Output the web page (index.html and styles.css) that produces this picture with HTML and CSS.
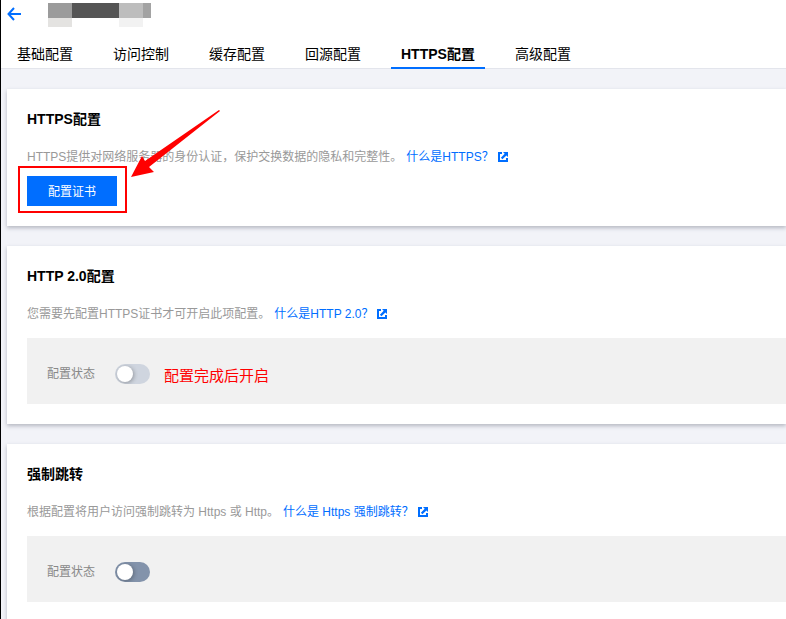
FILE: index.html
```html
<!DOCTYPE html>
<html lang="zh-CN">
<head>
    <meta charset="utf-8">
    <title>HTTPS配置</title>
    <link rel="stylesheet" href="styles.css">
</head>
<body>
    <svg class="sprite" aria-hidden="true">
        <symbol id="external" viewBox="0 0 10 10">
            <path d="M0 0h4v2H2v6h6V6h2v4H0z"/>
            <path d="M5 0h5v5L8.4 3.4 4.4 7.2 2.9 5.7 6.7 1.7z"/>
        </symbol>
    </svg>

    <header class="header">
        <div class="title-bar">
            <a class="back" href="#" aria-label="返回">
                <svg width="14" height="14" viewBox="0 0 14 14">
                    <path d="M7 1L1.5 7L7 13M1.5 7H14" fill="none" stroke="#006eff" stroke-width="2"/>
                </svg>
            </a>
            <svg class="domain" width="103" height="24" shape-rendering="crispEdges">
                <rect width="24" height="15" fill="#9b9b9b"/>
                <rect x="24" width="47" height="15" fill="#555555"/>
                <rect x="71" width="24" height="15" fill="#bdbdbd"/>
                <rect x="95" width="8" height="15" fill="#a3a3a3"/>
                <rect y="15" width="24" height="9" fill="#e4e3e1"/>
                <rect x="71" y="15" width="24" height="9" fill="#f2f2f2"/>
            </svg>
        </div>
        <nav class="tabs">
            <a class="tab" href="#">基础配置</a>
            <a class="tab" href="#">访问控制</a>
            <a class="tab" href="#">缓存配置</a>
            <a class="tab" href="#">回源配置</a>
            <a class="tab active" href="#">HTTPS配置</a>
            <a class="tab" href="#">高级配置</a>
        </nav>
    </header>

    <main class="content">
        <section class="card">
            <h3 class="card-title">HTTPS配置</h3>
            <p class="desc">
                <span>HTTPS提供对网络服务器的身份认证，保护交换数据的隐私和完整性。</span>
                <a class="link" href="#">什么是HTTPS？<svg class="icon"><use href="#external"/></svg></a>
            </p>
            <div class="action">
                <button class="button" type="button">配置证书</button>
                <div class="mark-box"></div>
            </div>
            <svg class="mark-arrow" width="90" height="68" viewBox="0 0 90 68">
                <path d="M0 67L11 46L14 51L88 0L89 1L18 57L23 62Z" fill="#ff0000"/>
            </svg>
        </section>

        <section class="card">
            <h3 class="card-title">HTTP 2.0配置</h3>
            <p class="desc">
                <span>您需要先配置HTTPS证书才可开启此项配置。</span>
                <a class="link" href="#">什么是HTTP 2.0？<svg class="icon"><use href="#external"/></svg></a>
            </p>
            <div class="panel">
                <label class="label" for="http2">配置状态</label>
                <input class="switch" type="checkbox" id="http2" disabled>
                <span class="mark-note">配置完成后开启</span>
            </div>
        </section>

        <section class="card">
            <h3 class="card-title">强制跳转</h3>
            <p class="desc">
                <span>根据配置将用户访问强制跳转为 Https 或 Http。</span>
                <a class="link" href="#">什么是 Https 强制跳转？<svg class="icon"><use href="#external"/></svg></a>
            </p>
            <div class="panel">
                <label class="label" for="redirect">配置状态</label>
                <input class="switch" type="checkbox" id="redirect">
            </div>
        </section>
    </main>
</body>
</html>
```

FILE: styles.css
```css
* {
    box-sizing: border-box;
}

body {
    margin: 0;
    min-height: 100vh;
    border-left: 1px solid #000;
    background: #f2f3f8;
    color: #000;
    font-family: "Liberation Sans", "Noto Sans CJK SC", sans-serif;
    font-size: 12px;
    line-height: 20px;
}

a {
    text-decoration: none;
}

.sprite {
    position: absolute;
    width: 0;
    height: 0;
}

.header {
    background: #fff;
    border-bottom: 1px solid #e3e5ec;
}

.title-bar {
    display: flex;
    align-items: flex-start;
    gap: 27px;
    height: 39px;
    padding: 3px 6px 0;
}

.back {
    display: flex;
    padding-top: 4px;
}

.tabs {
    display: flex;
    gap: 20px;
    height: 29px;
    padding: 0 6px;
}

.tab {
    height: 30px;
    padding: 0 10px;
    color: #000;
    font-size: 14px;
    line-height: 30px;
    white-space: nowrap;
}

.tab.active {
    border-bottom: 2px solid #006eff;
    font-weight: bold;
}

.content {
    display: flex;
    flex-direction: column;
    gap: 20px;
    padding: 20px 0 20px 6px;
}

.card {
    position: relative;
    padding: 20px 0 20px 20px;
    background: #fff;
    box-shadow: 0 2px 4px rgba(54, 58, 80, 0.32);
}

.card-title {
    margin: 0 0 18px;
    font-size: 14px;
    line-height: 20px;
}

.desc {
    display: flex;
    gap: 4px;
    margin: 0;
    color: #999;
}

.link {
    display: flex;
    align-items: center;
    gap: 4px;
    color: #006eff;
}

.icon {
    width: 10px;
    height: 10px;
    fill: #006eff;
}

.action {
    position: relative;
    width: fit-content;
    margin-top: 9px;
}

.button {
    display: block;
    height: 30px;
    padding: 0 21px 2px;
    border: none;
    background: #006eff;
    color: #fff;
    font-family: inherit;
    font-size: 12px;
    cursor: pointer;
}

.panel {
    position: relative;
    display: flex;
    align-items: flex-end;
    gap: 20px;
    height: 66px;
    margin-top: 14px;
    padding: 20px;
    background: #f1f1f1;
}

.label {
    color: #888;
}

.switch {
    appearance: none;
    width: 35px;
    height: 20px;
    margin: 0;
    padding: 2px;
    border-radius: 10px;
    background: #8393ab;
    cursor: pointer;
    overflow: hidden;
}

.switch::before {
    content: "";
    display: block;
    width: 16px;
    height: 16px;
    border-radius: 50%;
    background: #fff;
    box-shadow: 1px 1px 4px rgba(0, 0, 0, 0.3);
}

.switch:checked {
    background: #006eff;
}

.switch:checked::before {
    margin-left: 15px;
}

.switch:disabled {
    background: #cfd5df;
    cursor: not-allowed;
}

/* red marks drawn over the page */
.mark-box {
    position: absolute;
    top: -10px;
    left: -9px;
    right: -10px;
    bottom: -7px;
    border: 2px solid #ff0000;
    pointer-events: none;
}

.mark-arrow {
    position: absolute;
    top: 21px;
    left: 124px;
    pointer-events: none;
}

.mark-note {
    position: absolute;
    top: 28px;
    left: 137px;
    color: #ff0000;
    font-size: 15px;
}
```
